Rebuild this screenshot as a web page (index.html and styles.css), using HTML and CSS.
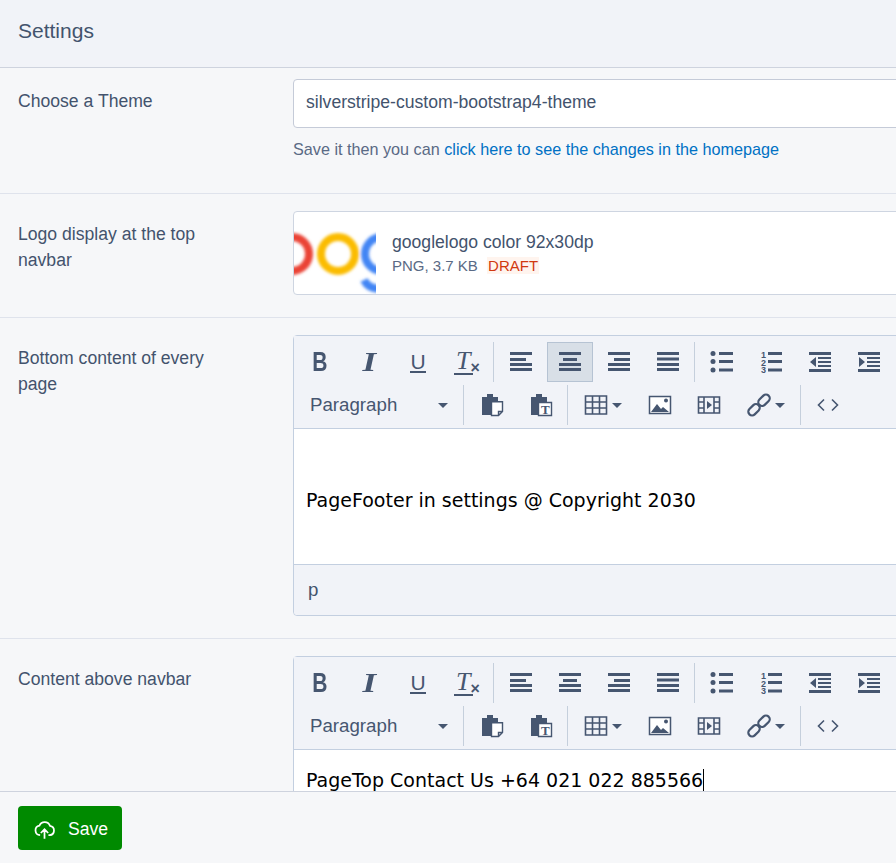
FILE: index.html
```html
<!DOCTYPE html>
<html lang="en">
<head>
    <meta charset="UTF-8">
    <title>Settings</title>
    <link rel="stylesheet" href="styles.css">
</head>
<body>
<svg class="defs" width="0" height="0">
    <symbol id="i-left" viewBox="0 0 24 24"><path d="M1 2h22v3H1zM1 8h16v3H1zM1 13h22v3H1zM1 18h22v3H1z"/></symbol>
    <symbol id="i-center" viewBox="0 0 24 24"><path d="M1 2h22v3H1zM5 8h14v3H5zM1 13h22v3H1zM1 18h22v3H1z"/></symbol>
    <symbol id="i-right" viewBox="0 0 24 24"><path d="M1 2h22v3H1zM7 8h16v3H7zM1 13h22v3H1zM1 18h22v3H1z"/></symbol>
    <symbol id="i-justify" viewBox="0 0 24 24"><path d="M1 2h22v3H1zM1 7.500h22v3H1zM1 13h22v3H1zM1 18h22v3H1z"/></symbol>
    <symbol id="i-bullets" viewBox="0 0 24 24"><circle cx="3" cy="3.500" r="2.500"/><circle cx="3" cy="11.500" r="2.500"/><circle cx="3" cy="20" r="2.500"/><path d="M9 2h14v3H9zM9 10h14v3H9zM9 18.500h14v3H9z"/></symbol>
    <symbol id="i-numbers" viewBox="0 0 24 24"><path d="M9 2h14v3H9zM9 10h14v3H9zM9 18.500h14v3H9z"/><text x="2" y="8" class="tiny">1</text><text x="2" y="15.500" class="tiny">2</text><text x="2" y="23" class="tiny">3</text></symbol>
    <symbol id="i-outdent" viewBox="0 0 24 24"><path d="M1 2h22v3H1zM10 7h13v2H10zM10 11h13v2H10zM10 15h13v2H10zM1 19h22v3H1zM8 7v10l-6-5z"/></symbol>
    <symbol id="i-indent" viewBox="0 0 24 24"><path d="M1 2h22v3H1zM10 7h13v2H10zM10 11h13v2H10zM10 15h13v2H10zM1 19h22v3H1zM2 7v10l6-5z"/></symbol>
    <symbol id="i-paste" viewBox="0 0 24 24"><path d="M2 4h5V1h6v3h5v4h-7v14H2z"/><path class="paper" d="M11.500 8.700h11v9.800l-4 4h-7zM22.500 18.500h-4v4"/></symbol>
    <symbol id="i-pastetext" viewBox="0 0 24 24"><path d="M2 4h5V1h6v3h5v5h-7v13H2z"/><path class="paper" d="M9.500 9.500h13v13h-13z"/><text x="12" y="21" class="stamp">T</text></symbol>
    <symbol id="i-table" viewBox="0 0 24 24"><path d="M1.500 3h21v18h-21zM1.500 9h21M1.500 15h21M8.500 3v18M15.500 3v18" class="line"/></symbol>
    <symbol id="i-image" viewBox="0 0 24 24"><path d="M1.500 3.500h21v17h-21z" class="thin"/><path d="M3 19l6-8 4 5 2-2 6 5z"/><circle cx="18" cy="7.500" r="2"/></symbol>
    <symbol id="i-media" viewBox="0 0 24 24"><path d="M1.500 4h21v16h-21zM7 4v16M17 4v16M1.500 9h5.500M1.500 15h5.500M17 9h5.500M17 15h5.500" class="line"/><path d="M10 8v8l5-4z"/></symbol>
    <symbol id="i-link" viewBox="0 0 24 24"><rect x="0.500" y="13" width="13" height="7.500" rx="3.700" transform="rotate(-45 7 16.700)" class="chain"/><rect x="10.500" y="3.500" width="13" height="7.500" rx="3.700" transform="rotate(-45 17 7.200)" class="chain"/></symbol>
    <symbol id="i-code" viewBox="0 0 24 24"><path d="M8 6.500L2.500 12 8 17.500M16 6.500l5.500 5.500-5.500 5.500" class="line"/></symbol>
</svg>

<div class="page">
    <header class="top"><h1>Settings</h1></header>

    <main class="form">
        <div class="row first">
            <label class="label">Choose a Theme</label>
            <div class="field">
                <div class="input">silverstripe-custom-bootstrap4-theme</div>
                <p class="help">Save it then you can <a href="#">click here to see the changes in the homepage</a></p>
            </div>
        </div>

        <div class="row">
            <label class="label">Logo display at the top navbar</label>
            <div class="field">
                <div class="upload">
                    <div class="thumb">
                        <svg width="82" height="82" viewBox="0 0 82 82">
                            <defs><filter id="soft"><feGaussianBlur stdDeviation="1.500"/></filter></defs>
                            <g fill="none" stroke-width="8" filter="url(#soft)">
                                <circle cx="-2" cy="42" r="17" stroke="#ea4335"/>
                                <circle cx="44" cy="42" r="17" stroke="#fbbc05"/>
                                <circle cx="88" cy="42" r="17" stroke="#4285f4"/>
                                <path d="M70 68c3 6 9 9 16 9" stroke="#4285f4"/>
                            </g>
                        </svg>
                    </div>
                    <div class="upload-info">
                        <div class="upload-name">googlelogo color 92x30dp</div>
                        <div class="upload-meta">PNG, 3.7 KB <span class="draft">DRAFT</span></div>
                    </div>
                </div>
            </div>
        </div>

        <div class="row">
            <label class="label">Bottom content of every page</label>
            <div class="field">
                <div class="editor">
                    <div class="toolbar">
                        <div class="tools">
                            <button class="tool"><span class="g-b">B</span></button>
                            <button class="tool"><span class="g-i">I</span></button>
                            <button class="tool"><span class="g-u">U</span></button>
                            <button class="tool"><span class="g-t">T</span><span class="g-x">×</span></button>
                            <i class="sep"></i>
                            <button class="tool"><svg><use href="#i-left"/></svg></button>
                            <button class="tool on"><svg><use href="#i-center"/></svg></button>
                            <button class="tool"><svg><use href="#i-right"/></svg></button>
                            <button class="tool"><svg><use href="#i-justify"/></svg></button>
                            <i class="sep"></i>
                            <button class="tool"><svg><use href="#i-bullets"/></svg></button>
                            <button class="tool"><svg><use href="#i-numbers"/></svg></button>
                            <button class="tool"><svg><use href="#i-outdent"/></svg></button>
                            <button class="tool"><svg><use href="#i-indent"/></svg></button>
                        </div>
                        <div class="tools">
                            <button class="select">Paragraph<b class="caret"></b></button>
                            <i class="sep wide"></i>
                            <button class="tool"><svg><use href="#i-paste"/></svg></button>
                            <button class="tool"><svg><use href="#i-pastetext"/></svg></button>
                            <i class="sep"></i>
                            <button class="tool menu"><svg><use href="#i-table"/></svg><b class="caret"></b></button>
                            <button class="tool"><svg><use href="#i-image"/></svg></button>
                            <button class="tool"><svg><use href="#i-media"/></svg></button>
                            <button class="tool menu"><svg><use href="#i-link"/></svg><b class="caret"></b></button>
                            <i class="sep"></i>
                            <button class="tool"><svg><use href="#i-code"/></svg></button>
                        </div>
                    </div>
                    <div class="content tall">
                        <p><br></p>
                        <p>PageFooter in settings @ Copyright 2030</p>
                    </div>
                    <div class="status">p</div>
                </div>
            </div>
        </div>

        <div class="row">
            <label class="label">Content above navbar</label>
            <div class="field">
                <div class="editor">
                    <div class="toolbar">
                        <div class="tools">
                            <button class="tool"><span class="g-b">B</span></button>
                            <button class="tool"><span class="g-i">I</span></button>
                            <button class="tool"><span class="g-u">U</span></button>
                            <button class="tool"><span class="g-t">T</span><span class="g-x">×</span></button>
                            <i class="sep"></i>
                            <button class="tool"><svg><use href="#i-left"/></svg></button>
                            <button class="tool"><svg><use href="#i-center"/></svg></button>
                            <button class="tool"><svg><use href="#i-right"/></svg></button>
                            <button class="tool"><svg><use href="#i-justify"/></svg></button>
                            <i class="sep"></i>
                            <button class="tool"><svg><use href="#i-bullets"/></svg></button>
                            <button class="tool"><svg><use href="#i-numbers"/></svg></button>
                            <button class="tool"><svg><use href="#i-outdent"/></svg></button>
                            <button class="tool"><svg><use href="#i-indent"/></svg></button>
                        </div>
                        <div class="tools">
                            <button class="select">Paragraph<b class="caret"></b></button>
                            <i class="sep wide"></i>
                            <button class="tool"><svg><use href="#i-paste"/></svg></button>
                            <button class="tool"><svg><use href="#i-pastetext"/></svg></button>
                            <i class="sep"></i>
                            <button class="tool menu"><svg><use href="#i-table"/></svg><b class="caret"></b></button>
                            <button class="tool"><svg><use href="#i-image"/></svg></button>
                            <button class="tool"><svg><use href="#i-media"/></svg></button>
                            <button class="tool menu"><svg><use href="#i-link"/></svg><b class="caret"></b></button>
                            <i class="sep"></i>
                            <button class="tool"><svg><use href="#i-code"/></svg></button>
                        </div>
                    </div>
                    <div class="content">
                        <p><span class="cursor">PageTop Contact Us +64 021 022 885566</span></p>
                    </div>
                </div>
            </div>
        </div>
    </main>

    <footer class="actions">
        <button class="save">
            <svg width="21" height="21" viewBox="0 0 24 24"><path d="M7 18.500a5.500 5.500 0 0 1-.8-10.900A6.500 6.500 0 0 1 18.300 7.800 5.400 5.400 0 0 1 18 18.500h-1.500M12 22.500V12M7.800 16l4.200-4.200 4.200 4.200"/></svg>
            Save
        </button>
    </footer>
</div>
</body>
</html>
```

FILE: styles.css
```css
*{
    margin: 0;
    padding: 0;
    box-sizing: border-box;
}
html,body{
    height: 100%;
}
body{
    overflow: hidden;
    background: #f6f7f9;
    color: #43536d;
    font-family: "Liberation Sans", Arial, sans-serif;
    font-size: 17.600px;
}
.defs{
    display: none;
}
.page{
    height: 100%;
    display: flex;
    flex-direction: column;
}

/* header */
.top{
    height: 68px;
    flex: none;
    padding: 18px 18px 0;
    background: #f1f3f8;
    border-bottom: 1px solid #ced3de;
}
.top h1{
    font-size: 21px;
    line-height: 26px;
    font-weight: normal;
}

/* rows */
.form{
    flex: 1;
    min-height: 0;
    overflow: hidden;
}
.row{
    display: grid;
    grid-template-columns: 275px 800px;
    padding: 17px 0 22px 18px;
    border-bottom: 1px solid #dfe3ec;
}
.row.first{
    padding-top: 11px;
}
.label{
    width: 210px;
    padding-top: 10px;
    line-height: 26px;
}
.first .label{
    padding-top: 9px;
}

/* theme input */
.input{
    height: 49px;
    padding: 0 12px;
    line-height: 45px;
    background: #fff;
    border: 1px solid #c5cbd8;
    border-radius: 4px;
}
.help{
    margin: 11px 0 12px;
    font-size: 16.200px;
    line-height: 20px;
    color: #5a6a85;
}
.help a{
    color: #0071c4;
    text-decoration: none;
}

/* logo upload */
.upload{
    height: 84px;
    display: flex;
    background: #fff;
    border: 1px solid #ced5e1;
    border-radius: 4px;
    overflow: hidden;
}
.thumb{
    width: 82px;
    flex: none;
    height: 82px;
}
.thumb svg{
    display: block;
}
.upload-info{
    padding: 17px 0 0 16px;
}
.upload-name{
    line-height: 26px;
}
.upload-meta{
    font-size: 15px;
    line-height: 20px;
    margin-top: 1px;
    color: #5a6a85;
}
.draft{
    margin-left: 5px;
    padding: 0 1px;
    color: #d1390f;
    background: #fff4ee;
}

/* wysiwyg */
.editor{
    background: #fff;
    border: 1px solid #c3cfe0;
    border-radius: 4px 0 0 4px;
}
.toolbar{
    height: 93px;
    padding: 6px 0 0 3px;
    background: #f1f3f8;
    border-bottom: 1px solid #c3cfe0;
}
.tools{
    display: flex;
    height: 40px;
    margin-bottom: 3px;
}
.tool,.select{
    height: 40px;
    flex: none;
    display: flex;
    align-items: center;
    justify-content: center;
    background: none;
    border: 1px solid transparent;
    color: #465670;
    font-family: inherit;
}
.tool{
    width: 46px;
    margin-right: 3px;
}
.tool.on{
    background: #d8dfe7;
    border-color: #b6c3d3;
}
.tool.menu{
    width: 62px;
    justify-content: flex-start;
    padding-left: 11px;
}
.tool svg{
    width: 24px;
    height: 24px;
    fill: #465670;
    flex: none;
}
.select{
    width: 166px;
    justify-content: flex-start;
    padding-left: 12px;
    font-size: 18.700px;
}
.select .caret{
    margin-left: 41px;
}
.caret{
    width: 0;
    height: 0;
    margin-left: 4px;
    border-left: 5px solid transparent;
    border-right: 5px solid transparent;
    border-top: 5px solid #465670;
}
.sep{
    width: 1px;
    height: 40px;
    flex: none;
    margin-right: 4px;
    background: #c5cfdc;
}
.sep.wide{
    margin-right: 5px;
}

/* icon parts that sit in the symbols */
.line{
    fill: none;
    stroke: #465670;
    stroke-width: 1.600;
}
.chain{
    fill: none;
    stroke: #465670;
    stroke-width: 2.200;
}
.thin{
    fill: #fff;
    stroke: #465670;
    stroke-width: 1.500;
}
.paper{
    fill: #fff;
    stroke: #465670;
    stroke-width: 1.400;
}
.tiny{
    font-size: 9px;
    font-weight: bold;
    font-family: "Liberation Sans", sans-serif;
}
.stamp{
    font-size: 13px;
    font-weight: bold;
    font-family: "Liberation Serif", serif;
}

/* text icons */
.g-b{
    display: inline-block;
    font-size: 27px;
    font-weight: bold;
    line-height: 26px;
    transform: scaleX(.78);
}
.g-i{
    display: inline-block;
    font-family: "Liberation Serif", serif;
    font-size: 27px;
    font-weight: bold;
    font-style: italic;
    line-height: 26px;
    transform: scaleX(1.300);
}
.g-u{
    font-size: 21px;
    line-height: 19px;
    padding: 0;
    border-bottom: 2px solid #465670;
    margin-top: 1px;
}
.g-t{
    font-family: "Liberation Serif", serif;
    font-size: 26px;
    font-style: italic;
    line-height: 24px;
    padding: 0 2px;
    border-bottom: 2px solid #465670;
    margin-left: -6px;
}
.g-x{
    font-size: 16px;
    font-weight: bold;
    line-height: 16px;
    margin: 11px -6px 0 -2px;
}

.content{
    height: 135px;
    padding: 0 12px;
    background: #fff;
    overflow: hidden;
    color: #000;
    font-family: "DejaVu Sans", Verdana, sans-serif;
    font-size: 19px;
    line-height: 27px;
}
.content p{
    margin-top: 17px;
}
.content p + p{
    margin-top: 14px;
}
.cursor{
    border-right: 1px solid #000;
}
.status{
    height: 51px;
    padding: 0 14px;
    line-height: 50px;
    font-size: 18.700px;
    background: #f1f3f8;
    border-top: 1px solid #c3cfe0;
    border-radius: 0 0 0 4px;
}

/* bottom bar */
.actions{
    height: 72px;
    flex: none;
    padding: 14px 18px 0;
    background: #f6f7f9;
    border-top: 1px solid #ced3de;
}
.save{
    width: 104px;
    height: 44px;
    display: flex;
    align-items: center;
    padding: 2px 0 0 16px;
    gap: 13px;
    color: #fff;
    background: #008a00;
    border: 0;
    border-radius: 4px;
    font-family: inherit;
    font-size: 17.600px;
}
.save svg{
    fill: none;
    stroke: #fff;
    stroke-width: 2;
    flex: none;
}
```
